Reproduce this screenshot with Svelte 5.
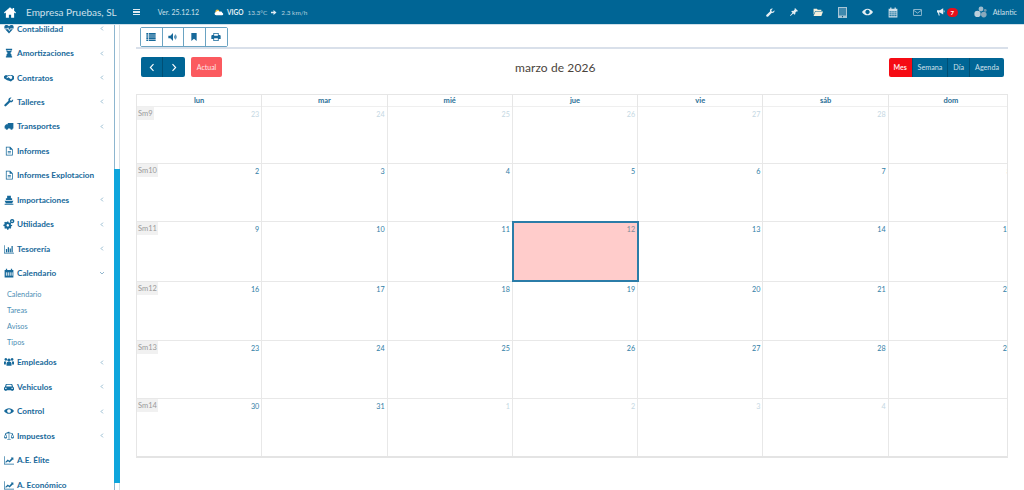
<script>
  const menu = [
    { label: 'Contabilidad', icon: 'heart', arrow: true },
    { label: 'Amortizaciones', icon: 'hourglass', arrow: true },
    { label: 'Contratos', icon: 'hands', arrow: true },
    { label: 'Talleres', icon: 'wrench', arrow: true },
    { label: 'Transportes', icon: 'truck', arrow: true },
    { label: 'Informes', icon: 'file' },
    { label: 'Informes Explotacion', icon: 'file' },
    { label: 'Importaciones', icon: 'ship', arrow: true },
    { label: 'Utilidades', icon: 'cogs', arrow: true },
    { label: 'Tesorería', icon: 'bars', arrow: true },
    { label: 'Calendario', icon: 'calendar', open: true, children: ['Calendario', 'Tareas', 'Avisos', 'Tipos'] },
    { label: 'Empleados', icon: 'users', arrow: true },
    { label: 'Vehiculos', icon: 'car', arrow: true },
    { label: 'Control', icon: 'eye', arrow: true },
    { label: 'Impuestos', icon: 'scale', arrow: true },
    { label: 'A.E. Élite', icon: 'chart' },
    { label: 'A. Económico', icon: 'chart' }
  ];

  const icons = {
    heart: 'M8 15 1.5 8C-.5 5.500.5 1.500 4 1.500c1.800 0 3 1 4 2.200 1-1.200 2.200-2.200 4-2.200 3.500 0 4.500 4 2.500 6.500zM1.500 7.200h3.800L6.500 5 8.500 9.500 10 7.200h4.500v1h-4L8.300 11.500 6.400 7.500l-.5.700H1.500z',
    hourglass: 'M3 1h10v2h-1v2c0 1.500-1.500 2.500-2.500 3C10.500 8.500 12 9.500 12 11v2h1v2H3v-2h1v-2c0-1.500 1.500-2.500 2.500-3C5.500 7.500 4 6.500 4 5V3H3zM5.300 3v1.500h5.400V3z',
    hands: 'M0 5l3-2 3 1 2-1 3 .5L13 3l3 2v5l-2 1-3 2.500-3-1-3-1-5-3zM5.500 5.500 3.800 8l1 .5L7 6.800l4 3 2-1.300V5.300L10.500 4.500 8 4.300z',
    wrench: 'M14.500 3.500 12 6l-2-.5L9.500 3.500 12 1C9.500.2 7 2 7 4.500c0 .5 0 1 .2 1.300L1 12c-.8.8-.8 1.800 0 2.500s1.700.7 2.500 0l6.200-6.200C12.500 9.200 15.500 6.800 14.500 3.500z',
    truck: 'M6 3h9v9h-1a2 2 0 0 1-4 0H6.500a2 2 0 0 1-4 0H1V8l2.500-3H6z',
    file: 'M3 1h7l4 4v10H3zM4.200 2.200v11.600h8.600V6H9V2.200zM6 8h5v1H6zM6 10.500h5v1H6z',
    ship: 'M5 1h6v4h2v3H3V5h2zM1 9h14l-2 4H3zM1 14h14v1.500H1z',
    cogs: 'M5 4h2l.4 1.500 1.300.6 1.400-.8 1.400 1.400-.8 1.400.6 1.300L13 9v2l-1.500.4-.6 1.300.8 1.400-1.400 1.400-1.400-.8-1.300.6L7 17H5l-.4-1.500-1.300-.6-1.400.8-1.400-1.400.8-1.400-.6-1.300L-1 11V9l1.500-.4.6-1.300-.8-1.400 1.400-1.400 1.400.8 1.300-.6zM6 8a2 2 0 1 0 .1 0zM13 0a3.500 3.500 0 1 0 .1 0zM13 2.300a1.200 1.200 0 1 1-.1 0z',
    bars: 'M0 2h1v12h15v1H0zM3 8h2v5H3zM6 5h2v8H6zM9 7h2v6H9zM12 3h2v10h-2z',
    calendar: 'M1 3h2V1h2v2h6V1h2v2h2v12H1zM3 7v2h2V7zm3 0v2h2V7zm3 0v2h2V7zm3 0v2h2V7zM3 10v2h2v-2zm3 0v2h2v-2zm3 0v2h2v-2zm3 0v2h2v-2z',
    users: 'M8 2.500a2.600 2.600 0 1 1-.1 0zM3 1.500a2.200 2.200 0 1 1-.1 0zM13 1.500a2.200 2.200 0 1 1-.1 0zM5 8h6l1 2v4H4v-4zM0 7h3.500L3 9.500V12H0zM12.500 7H16v5h-3V9.500z',
    car: 'M3 3h10l1.500 4.500L16 9v4h-2v1.500h-2V13H4v1.500H2V13H0V9l1.500-1.500zM4.200 4.500 3.500 7h9l-.7-2.500zM2 9v2h2V9zm10 0v2h2V9z',
    eye: 'M0 8c2-3 5-4.500 8-4.500S14 5 16 8c-2 3-5 4.500-8 4.500S2 11 0 8zm8-3a3 3 0 1 0 .1 0z',
    scale: 'M7.500 1h1v1.500L14 3.500V4.500L16 10c0 1.500-1.500 2-2.500 2S11 11.500 11 10l2-5.500L8.500 3.500V13H11v1H5v-1h2.500V3.500L3 4.500 5 10c0 1.500-1.500 2-2.500 2S0 11.500 0 10l2-5.500V3.500zM13.500 6 12 10h3zM2.500 6 1 10h3z',
    chart: 'M0 2h1v12h15v1.200H0zM2 11l4-4 2.500 2L12 5l-1-1h4v4l-1-1-5 5-2.500-2L3 12.500z'
  };

  const weekDays = ['lun', 'mar', 'mié', 'jue', 'vie', 'sáb', 'dom'];

  const weeks = [
    { name: 'Sm9', height: 57, days: [23, 24, 25, 26, 27, 28, 1], muted: [0, 1, 2, 3, 4, 5, 6] },
    { name: 'Sm10', height: 58, days: [2, 3, 4, 5, 6, 7, 8], muted: [] },
    { name: 'Sm11', height: 60, days: [9, 10, 11, 12, 13, 14, 15], muted: [] },
    { name: 'Sm12', height: 59, days: [16, 17, 18, 19, 20, 21, 22], muted: [] },
    { name: 'Sm13', height: 58, days: [23, 24, 25, 26, 27, 28, 29], muted: [] },
    { name: 'Sm14', height: 57, days: [30, 31, 1, 2, 3, 4, 5], muted: [2, 3, 4, 5, 6] }
  ];
</script>

<div class="page">
  <header class="topbar">
    <svg class="home" viewBox="0 0 16 14"><path d="M8 0 0 7l1 1.200L2.500 7v7H6.500v-4h3v4h4V7L15 8.200 16 7l-2.500-2.200V1H11.500v2z" /></svg>
    <span class="company">Empresa Pruebas, SL</span>
    <span class="burger"><i></i><i></i><i></i></span>
    <span class="version">Ver. 25.12.12</span>
    <svg class="weather" viewBox="0 0 18 12">
      <circle cx="6" cy="4" r="3.5" fill="#f0c040" />
      <path d="M4 11a3 3 0 0 1 0-6c1-2 5-2.500 6.500-.5C13 3.500 15 5 15 7c2 0 2.500 4-.5 4z" fill="#fff" />
    </svg>
    <b class="city">VIGO</b>
    <span class="temp">13.3°C</span>
    <svg class="wind" viewBox="0 0 12 10"><path d="M0 3.500h5V0l6 5-6 5V6.500H0z" /></svg>
    <span class="temp">2.3 km/h</span>

    <div class="tools">
      <svg class="t-wrench" viewBox="0 0 16 16"><path d="M15 4 12 6.500 10 6 9.500 4 12 1.200C9.500.5 7 2 7 5c0 .5 0 .8.100 1.200L1 12c-1 1-1 2 0 3s2 1 3 0l6-6C13 9.500 16 7 15 4z" /></svg>
      <svg class="t-pin" viewBox="0 0 16 16"><path d="M10 0l6 6-1.500 1-1-.5-3 3 .3 2.500L9 13.500 6.500 11 1 16 0 15l5-5.500L2.500 7 4 5.500l2.500.3 3-3-.5-1z" /></svg>
      <svg class="t-folder" viewBox="0 0 18 14"><path d="M1 1h6l1.500 2H15v2H4L1 12zM4.500 6H18l-3 8H1z" /></svg>
      <svg class="t-tablet" viewBox="0 0 9 11">
        <rect width="9" height="11" fill="#a9c6d6" />
        <rect x="1" y="1" width="7" height="7.5" fill="#3f88ad" />
        <circle cx="4.500" cy="9.700" r=".6" fill="#0b4a6b" />
      </svg>
      <svg class="t-eye" viewBox="0 0 18 12"><path fill-rule="evenodd" d="M0 6c2-3.500 5.500-5.500 9-5.500S16 2.500 18 6c-2 3.500-5.500 5.500-9 5.500S2 9.500 0 6zm9-3.500a3.500 3.500 0 1 0 .1 0z" /></svg>
      <svg class="t-cal" viewBox="0 0 16 16"><path fill-rule="evenodd" d="M1 2h2.500V0h2v2h5V0h2v2H15v14H1zM2.500 6v2h2V6zm3 0v2h2V6zm3 0v2h2V6zm3 0v2h2V6zM2.500 9v2h2V9zm3 0v2h2V9zm3 0v2h2V9zm3 0v2h2V9zM2.500 12v2h2v-2zm3 0v2h2v-2zm3 0v2h2v-2zm3 0v2h2v-2z" /></svg>
      <svg class="t-mail" viewBox="0 0 16 12"><rect x=".7" y=".7" width="14.600" height="10.600" rx="1" /><path d="M1 2 8 7l7-5" /></svg>
      <span class="notify">
        <svg viewBox="0 0 16 14"><path d="M0 4h5l6-3.500v11L5 8H3.500L5 13H3L1.500 8H0zM12 4c2 0 2 4 0 4z" /></svg>
        <em>7</em>
      </span>
      <span class="user">
        <svg viewBox="0 0 20 18">
          <circle cx="10" cy="4" r="3.500" fill="#9fbccd" />
          <circle cx="5" cy="11" r="4.500" fill="#bcd0dc" />
          <circle cx="14" cy="12" r="4" fill="#8aa9bc" />
          <circle cx="16" cy="6" r="2" fill="#6f97ae" />
        </svg>
        Atlantic
      </span>
    </div>
  </header>

  <div class="body">
    <aside class="sidebar">
      <nav class="menu">
        {#each menu as item}
          <div class="item">
            <svg class="mi" viewBox="0 0 16 16"><path d={icons[item.icon]} fill-rule="evenodd" /></svg>
            <span class="label">{item.label}</span>
            {#if item.arrow}
              <svg class="chev" viewBox="0 0 6 8"><path d="M4.500 1 1.500 4l3 3" /></svg>
            {:else if item.open}
              <svg class="chev down" viewBox="0 0 8 6"><path d="M1 1.500l3 3 3-3" /></svg>
            {/if}
          </div>
          {#if item.children}
            <ul class="sub">
              {#each item.children as child}
                <li>{child}</li>
              {/each}
            </ul>
          {/if}
        {/each}
      </nav>
      <div class="scroll"><div class="thumb"></div></div>
    </aside>

    <main class="content">
      <div class="toolbar">
        <button aria-label="Lista"><svg viewBox="0 0 14 12"><path d="M0 0h2.500v2.500H0zM3.500 0H14v2.500H3.500zM0 3.200h2.500v2.500H0zM3.500 3.200H14v2.500H3.500zM0 6.400h2.500v2.500H0zM3.500 6.400H14v2.500H3.500zM0 9.600h2.500V12H0zM3.500 9.600H14V12H3.500z" /></svg></button>
        <button aria-label="Sonido"><svg viewBox="0 0 14 12"><path d="M0 4h3l4-4v12L3 8H0zM8.500 3c1.500 1.500 1.500 4.500 0 6zM10.500 1.500c2.500 2.500 2.500 6.500 0 9z" /></svg></button>
        <button aria-label="Marcador"><svg viewBox="0 0 10 12"><path d="M1 0h8v12L5 8.500 1 12z" /></svg></button>
        <button aria-label="Imprimir"><svg viewBox="0 0 14 12"><path d="M3 0h8v3h2l1 1v5h-3v3H3V9H0V4l1-1h2zM4.200 1.200V4h5.600V1.200zM4.200 8v2.800h5.600V8z" fill-rule="evenodd" /></svg></button>
      </div>
      <div class="rule"></div>

      <div class="cal-head">
        <div class="left">
          <div class="nav-group">
            <button aria-label="Anterior"><svg viewBox="0 0 8 12"><path d="M6 1.500 1.800 6 6 10.500" /></svg></button>
            <button aria-label="Siguiente"><svg viewBox="0 0 8 12"><path d="M2 1.500 6.200 6 2 10.500" /></svg></button>
          </div>
          <button class="today">Actual</button>
        </div>
        <h2>marzo de 2026</h2>
        <div class="views">
          <button class="on">Mes</button>
          <button>Semana</button>
          <button>Día</button>
          <button>Agenda</button>
        </div>
      </div>

      <div class="calendar">
        <div class="grid">
          <div class="days">
            {#each weekDays as d}
              <div class="day">{d}</div>
            {/each}
          </div>
          {#each weeks as w}
            <div class="week" style="height: {w.height}px">
              {#each w.days as n, i}
                <div class="cell" class:today-cell={w.name === 'Sm11' && i === 3}>
                  {#if i === 0}<span class="wk">{w.name}</span>{/if}
                  <div class="num" class:muted={w.muted.includes(i)}>{n}</div>
                </div>
              {/each}
            </div>
          {/each}
        </div>
      </div>
    </main>
  </div>
</div>

<style>
  :global(body) {
    margin: 0;
    background: #fff;
    font-family: Lato, "Open Sans", sans-serif;
    overflow: hidden;
  }

  button {
    font-family: inherit;
    cursor: pointer;
  }

  .page {
    width: 1024px;
    height: 490px;
    display: flex;
    flex-direction: column;
    overflow: hidden;
  }

  .topbar {
    height: 24px;
    flex: none;
    display: flex;
    align-items: center;
    background: #006595;
    color: #fff;
    border-bottom: 1px solid #cfe0ea;
  }

  .home {
    width: 12px;
    height: 11px;
    margin-left: 4px;
    fill: #fff;
  }

  .company {
    margin-left: 10px;
    font-size: 10px;
    color: #cfe0ea;
  }

  .burger {
    display: flex;
    flex-direction: column;
    gap: 1px;
    width: 7px;
    margin-left: 16px;
  }

  .burger i {
    height: 1.5px;
    background: #dfeaf1;
  }

  .version {
    margin-left: 18px;
    font-size: 7px;
    color: #cfe0ea;
  }

  .weather {
    width: 10px;
    height: 7px;
    margin-left: 15px;
  }

  .city {
    margin-left: 3px;
    font-size: 6.5px;
    color: #eaf2f6;
  }

  .temp {
    margin-left: 4px;
    font-size: 6.5px;
    color: #b5d0de;
  }

  .wind {
    width: 6px;
    height: 5px;
    margin-left: 4px;
    fill: #dfeaf1;
  }

  .wind + .temp {
    margin-left: 4px;
  }

  .tools {
    margin-left: auto;
    display: flex;
    align-items: center;
    gap: 15px;
    padding-right: 7px;
  }

  .tools svg {
    height: 11px;
    fill: #e4eef3;
    display: block;
  }

  .tools .t-wrench {
    width: 9px;
    height: 9px;
  }

  .tools .t-pin {
    width: 8px;
    height: 8px;
  }

  .tools .t-folder {
    width: 10px;
    height: 8px;
    fill: #f2efdc;
  }

  .tools .t-tablet {
    width: 9px;
    height: 11px;
  }

  .tools .t-eye {
    width: 11px;
    height: 8px;
  }

  .tools .t-cal {
    width: 10px;
    height: 11px;
    fill: #cfe0ea;
  }

  .tools .t-mail {
    width: 9px;
    height: 7px;
    fill: none;
    stroke: #cfe0ea;
    stroke-width: 1.2;
  }

  .notify {
    display: flex;
    align-items: center;
    gap: 1px;
  }

  .notify svg {
    width: 9px;
    height: 8px;
  }

  .notify em {
    width: 11px;
    height: 9px;
    border-radius: 5px;
    background: #e8101c;
    color: #fff;
    font-style: normal;
    font-weight: 700;
    font-size: 6px;
    line-height: 9px;
    text-align: center;
  }

  .user {
    display: flex;
    align-items: center;
    gap: 5px;
    margin-left: 1px;
    font-size: 7.2px;
    color: #cfe0ea;
  }

  .tools .user svg {
    width: 14px;
    height: 13px;
  }

  .body {
    flex: 1;
    display: flex;
    min-height: 0;
  }

  .sidebar {
    width: 120px;
    flex: none;
    display: flex;
    overflow: hidden;
  }

  .menu {
    width: 114px;
    flex: none;
    margin-top: -8.6px;
  }

  .item {
    height: 24.45px;
    display: flex;
    align-items: center;
    padding: 0 9px 0 4px;
    color: #17699a;
  }

  .mi {
    width: 10px;
    height: 10px;
    fill: #17699a;
    flex: none;
    overflow: visible;
  }

  .label {
    margin-left: 3px;
    font-size: 8.2px;
    font-weight: 700;
    white-space: nowrap;
  }

  .chev {
    margin-left: auto;
    width: 4px;
    height: 5px;
    fill: none;
    stroke: #5a93b5;
    stroke-width: 1;
    margin-right: 1px;
  }

  .chev.down {
    width: 6px;
    height: 4px;
    margin-right: 0;
  }

  .sub {
    list-style: none;
    margin: 1.5px 0 -0.5px;
    padding: 0 0 0 7px;
  }

  .sub li {
    height: 16px;
    line-height: 16px;
    font-size: 7.3px;
    color: #4d8fb5;
  }

  .scroll {
    width: 6px;
    box-sizing: border-box;
    position: relative;
    background: #fff;
    border-left: 1px solid #8db6cf;
    border-right: 1px solid #d8e0e6;
  }

  .thumb {
    position: absolute;
    top: 144px;
    bottom: 7px;
    left: -1px;
    right: -1px;
    background: #0ea5dc;
  }

  .content {
    flex: 1;
    min-width: 0;
    padding: 0 16px;
  }

  .toolbar {
    height: 20px;
    margin: 2px 0 0 4px;
    display: flex;
    width: max-content;
    border: 1px solid #6aa3c2;
    border-radius: 2px;
    box-sizing: border-box;
  }

  .toolbar button {
    width: 21.5px;
    background: #fff;
    border: 0;
    border-right: 1px solid #6aa3c2;
    padding: 0;
    display: flex;
    align-items: center;
    justify-content: center;
  }

  .toolbar button:last-child {
    border-right: 0;
  }

  .toolbar svg {
    width: 10px;
    height: 8px;
    fill: #17699a;
  }

  .rule {
    height: 2px;
    background: #d9e0ea;
  }

  .cal-head {
    height: 20px;
    margin: 8px 4px 0 5px;
    display: flex;
    align-items: center;
    justify-content: space-between;
  }

  .left {
    display: flex;
    align-items: center;
    gap: 6px;
  }

  .nav-group {
    display: flex;
    height: 20px;
    border-radius: 2px;
    overflow: hidden;
  }

  .nav-group button {
    width: 22px;
    border: 0;
    padding: 0;
    background: #006595;
    border-right: 1px solid #004f75;
    display: flex;
    align-items: center;
    justify-content: center;
  }

  .nav-group button:last-child {
    border-right: 0;
  }

  .nav-group svg {
    width: 6px;
    height: 9px;
    fill: none;
    stroke: #fff;
    stroke-width: 1.5;
  }

  .today {
    height: 20px;
    width: 31px;
    padding: 0;
    border: 0;
    border-radius: 2px;
    background: #fb5a5f;
    color: #ffe8e8;
    font-size: 7px;
  }

  h2 {
    margin: 0;
    font-size: 12px;
    font-weight: 400;
    color: #4a443c;
    letter-spacing: 0.1px;
  }

  .views {
    display: flex;
    height: 19px;
    border-radius: 2px;
    overflow: hidden;
  }

  .views button {
    border: 0;
    border-right: 1px solid #004f75;
    background: #006595;
    color: #cfe0ea;
    padding: 0 5px;
    font-size: 7.2px;
  }

  .views button:last-child {
    border-right: 0;
  }

  .views button.on {
    background: #f50b14;
    color: #fde8e8;
    font-weight: 700;
    font-size: 7px;
    width: 24px;
    padding: 0;
  }

  .calendar {
    margin-top: 17px;
    overflow: hidden;
    border-left: 1px solid #e6e6e6;
    border-right: 1px solid #e6e6e6;
    border-bottom: 2px solid #e4e4e4;
  }

  .grid {
    width: 877px;
  }

  .days {
    display: grid;
    grid-template-columns: repeat(7, 1fr);
    height: 13px;
    border-top: 1px solid #e6e6e6;
    border-bottom: 1px solid #efefef;
    box-sizing: border-box;
  }

  .day {
    border-right: 1px solid #e6e6e6;
    text-align: center;
    font-size: 7.5px;
    font-weight: 700;
    line-height: 12px;
    color: #2a6f96;
  }

  .week {
    display: grid;
    grid-template-columns: repeat(7, 1fr);
    border-bottom: 1px solid #e8e8e8;
    box-sizing: border-box;
  }

  .week:last-child {
    border-bottom: 0;
  }

  .cell {
    position: relative;
    border-right: 1px solid #e8e8e8;
    min-width: 0;
  }

  .today-cell {
    background: #ffcccb;
    outline: 2px solid #2b7ca8;
    outline-offset: -1px;
    z-index: 1;
  }

  .wk {
    position: absolute;
    top: 0;
    left: 0;
    padding: 3px 1px 2px 1px;
    background: #f1f1f1;
    color: #9a9a9a;
    font-size: 7.5px;
    line-height: 8px;
  }

  .num {
    text-align: right;
    padding: 3px 2px 0 0;
    font-size: 7.2px;
    line-height: 10px;
    color: #2f7ea6;
  }

  .num.muted {
    color: #c5d8e3;
  }

  .today-cell .num {
    color: #7c8a98;
  }
</style>
